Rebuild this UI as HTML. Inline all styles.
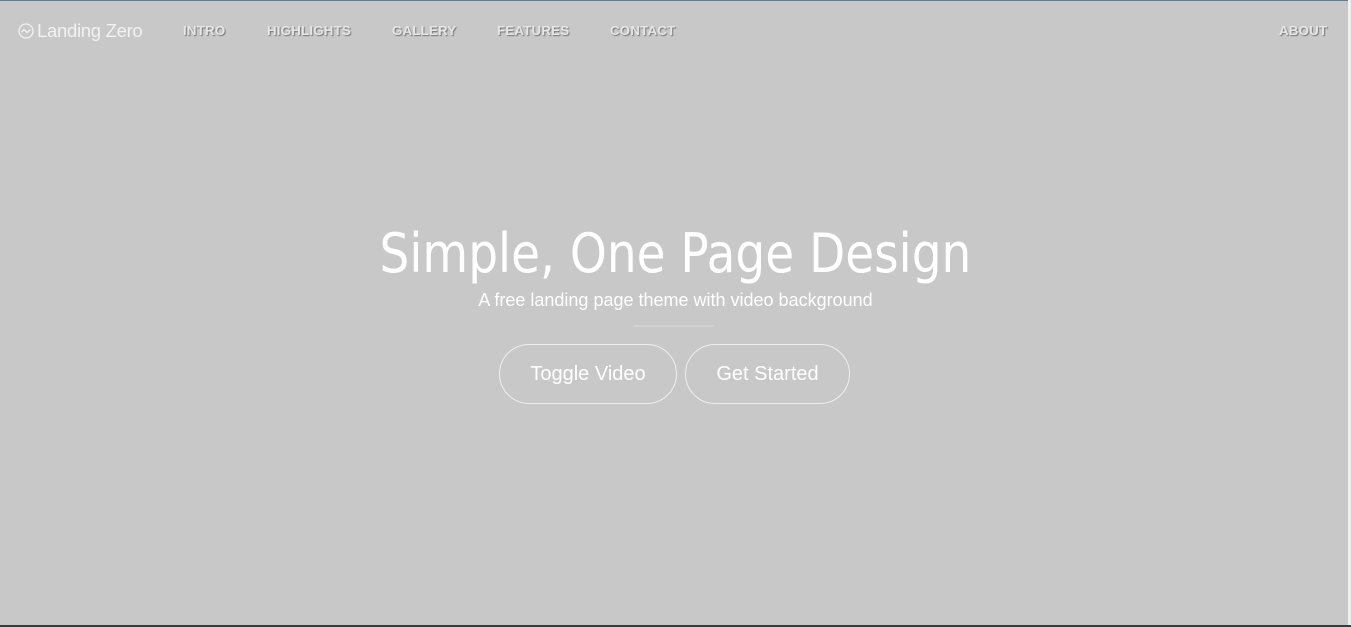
<!DOCTYPE html>
<html><head><meta charset="utf-8"><style>
html,body{margin:0;padding:0;width:1351px;height:627px;overflow:hidden;background:#c8c8c8;font-family:"Liberation Sans",sans-serif;}
.top{position:absolute;left:0;top:0;width:1351px;height:1px;background:#6b7a88}
.bot{position:absolute;left:0;top:625px;width:1351px;height:2px;background:#3a3a3a}
.rt{position:absolute;left:1348px;top:0;width:3px;height:627px;background:#f0f0f0}
.logo{position:absolute;left:18px;top:20px;color:#f2f2f2;font-size:18.5px;letter-spacing:-0.3px}
.logo svg{vertical-align:-2px;margin-right:3px}
.nav{position:absolute;top:23px;color:#e6e6e6;font-size:13.3px;font-weight:bold;text-shadow:1px 1px 1px #777;letter-spacing:0.2px}
h1{position:absolute;left:0;width:1351px;top:222px;margin:0;text-align:center;color:#fff;font-family:"Comic Sans MS","DejaVu Sans",sans-serif;font-weight:normal;font-size:54px;transform:scaleX(0.87);transform-origin:675px 0}
.sub{position:absolute;left:0;width:1351px;top:290px;text-align:center;color:#fff;font-size:18px}
.line{position:absolute;left:634px;top:325px;width:80px;height:2px;background:#d2d2d2}
.btn{position:absolute;top:344px;height:58px;border:1px solid #eee;border-radius:30px;color:#fff;font-size:20px;line-height:58px;text-align:center;box-sizing:content-box}
</style></head><body>
<div class="top"></div><div class="rt"></div><div class="bot"></div>
<div class="logo"><svg width="16" height="16" viewBox="0 0 16 16"><circle cx="8" cy="8" r="7" fill="none" stroke="#f2f2f2" stroke-width="1.3"/><path d="M3.5 9 L6 6.5 L9 9.5 L12.5 6.5" fill="none" stroke="#f2f2f2" stroke-width="1.3"/></svg>Landing Zero</div>
<div class="nav" style="left:183px">INTRO</div>
<div class="nav" style="left:267px">HIGHLIGHTS</div>
<div class="nav" style="left:392px">GALLERY</div>
<div class="nav" style="left:497px">FEATURES</div>
<div class="nav" style="left:610px">CONTACT</div>
<div class="nav" style="left:1279px">ABOUT</div>
<h1>Simple, One Page Design</h1>
<div class="sub">A free landing page theme with video background</div>
<div class="line"></div>
<div class="btn" style="left:499px;width:176px">Toggle Video</div>
<div class="btn" style="left:685px;width:163px">Get Started</div>
</body></html>
